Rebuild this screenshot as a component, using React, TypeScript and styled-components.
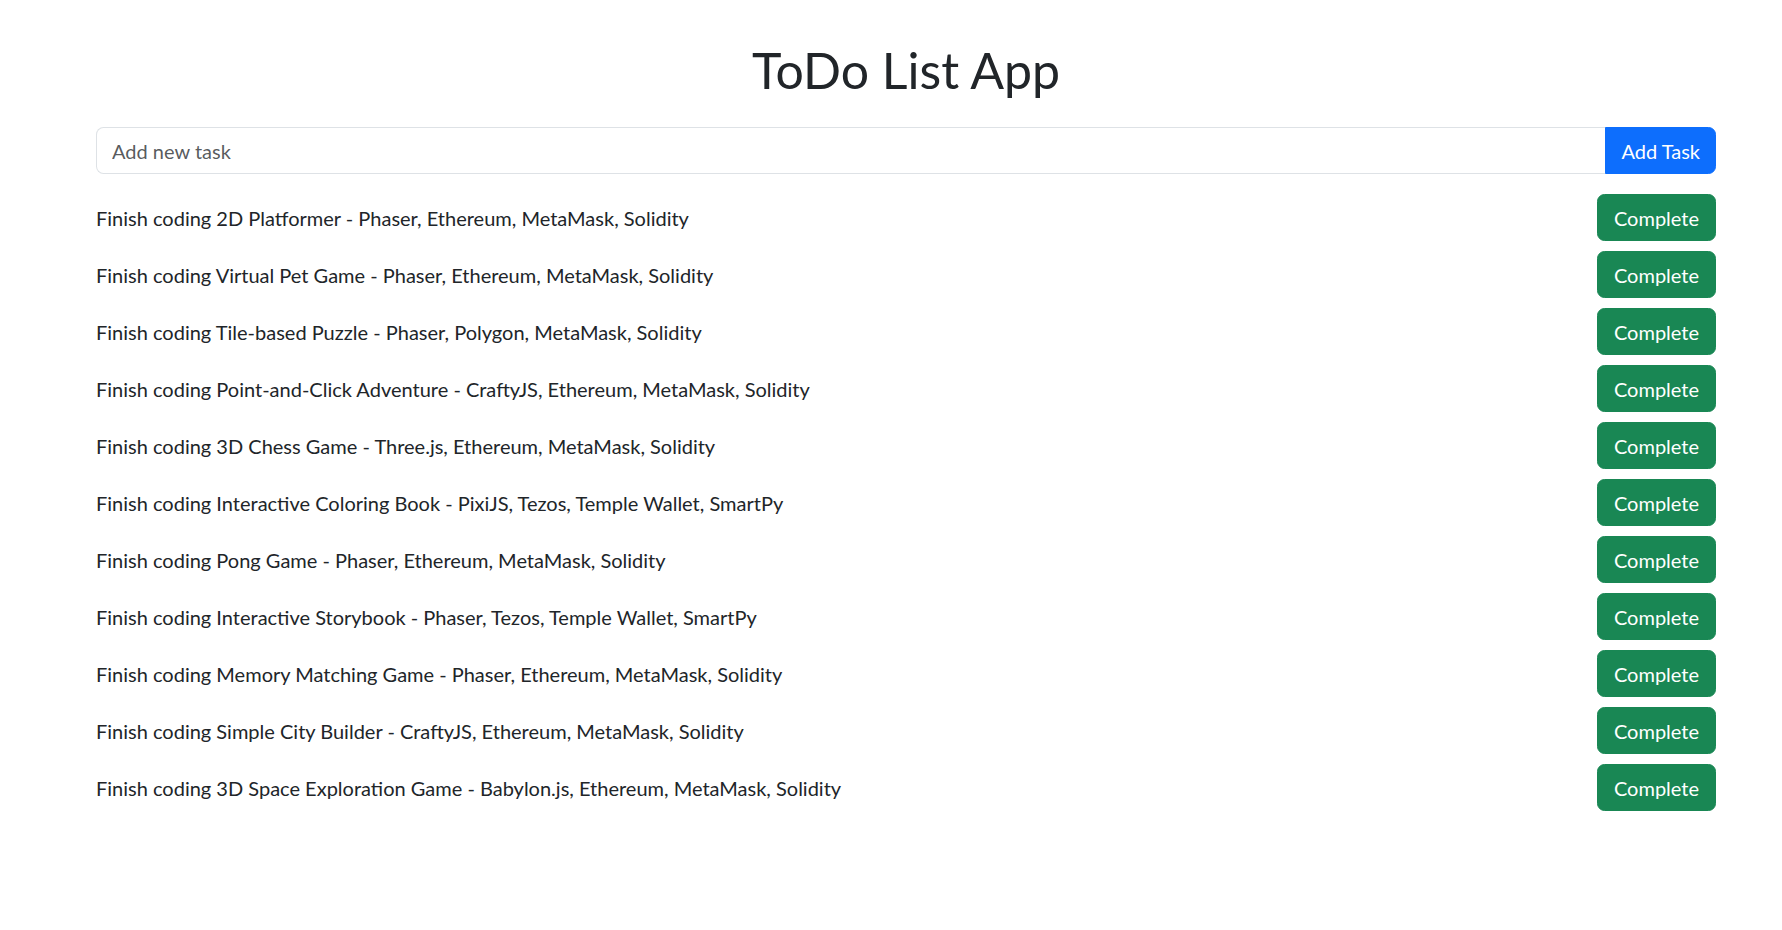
import React, { useState } from "react";
import styled, { createGlobalStyle } from "styled-components";

const GlobalStyle = createGlobalStyle`
  * { box-sizing: border-box; }
  body {
    margin: 0;
    background: #ffffff;
    color: #212529;
    font-family: Lato, "Noto Sans", Roboto, sans-serif;
    font-size: 20px;
    line-height: 1.5;
  }
`;

const Page = styled.div`
  padding: 40px 66px 40px 96px;
`;

const Title = styled.h1`
  margin: 0 0 27px;
  text-align: center;
  font-size: 50px;
  font-weight: 400;
  line-height: 60px;
  color: #212529;
`;

const InputGroup = styled.form`
  display: flex;
  align-items: stretch;
  margin-bottom: 20px;
`;

const TaskInput = styled.input`
  flex: 1;
  min-width: 0;
  height: 47px;
  padding: 7.5px 15px;
  font: inherit;
  color: #212529;
  border: 1.25px solid #dee2e6;
  border-right: none;
  border-radius: 7.5px 0 0 7.5px;
  outline: none;
  &::placeholder {
    color: rgba(33, 37, 41, 0.75);
  }
`;

const Button = styled.button<{ $variant: "primary" | "success" }>`
  height: 47px;
  padding: 0 16px;
  font: inherit;
  color: #ffffff;
  border: 1.25px solid ${(p) => (p.$variant === "primary" ? "#0d6efd" : "#198754")};
  background: ${(p) => (p.$variant === "primary" ? "#0d6efd" : "#198754")};
  border-radius: 7.5px;
  cursor: pointer;
  white-space: nowrap;
`;

const AddButton = styled(Button)`
  padding: 0 15px;
  border-radius: 0 7.5px 7.5px 0;
`;

const List = styled.ul`
  list-style: none;
  margin: 0;
  padding: 0;
`;

const Row = styled.li`
  display: flex;
  align-items: center;
  justify-content: space-between;
  margin-bottom: 10px;
`;

const TaskText = styled.span`
  line-height: 30px;
`;

const initialTasks = [
  "Finish coding 2D Platformer - Phaser, Ethereum, MetaMask, Solidity",
  "Finish coding Virtual Pet Game - Phaser, Ethereum, MetaMask, Solidity",
  "Finish coding Tile-based Puzzle - Phaser, Polygon, MetaMask, Solidity",
  "Finish coding Point-and-Click Adventure - CraftyJS, Ethereum, MetaMask, Solidity",
  "Finish coding 3D Chess Game - Three.js, Ethereum, MetaMask, Solidity",
  "Finish coding Interactive Coloring Book - PixiJS, Tezos, Temple Wallet, SmartPy",
  "Finish coding Pong Game - Phaser, Ethereum, MetaMask, Solidity",
  "Finish coding Interactive Storybook - Phaser, Tezos, Temple Wallet, SmartPy",
  "Finish coding Memory Matching Game - Phaser, Ethereum, MetaMask, Solidity",
  "Finish coding Simple City Builder - CraftyJS, Ethereum, MetaMask, Solidity",
  "Finish coding 3D Space Exploration Game - Babylon.js, Ethereum, MetaMask, Solidity",
];

export default function App() {
  const [tasks, setTasks] = useState<string[]>(initialTasks);
  const [value, setValue] = useState("");

  const add = (e: React.FormEvent) => {
    e.preventDefault();
    if (!value.trim()) return;
    setTasks([...tasks, value.trim()]);
    setValue("");
  };

  return (
    <>
      <GlobalStyle />
      <Page>
        <Title>ToDo List App</Title>
        <InputGroup onSubmit={add}>
          <TaskInput
            placeholder="Add new task"
            value={value}
            onChange={(e) => setValue(e.target.value)}
          />
          <AddButton type="submit" $variant="primary">Add Task</AddButton>
        </InputGroup>
        <List>
          {tasks.map((t, i) => (
            <Row key={i}>
              <TaskText>{t}</TaskText>
              <Button
                $variant="success"
                onClick={() => setTasks(tasks.filter((_, j) => j !== i))}
              >
                Complete
              </Button>
            </Row>
          ))}
        </List>
      </Page>
    </>
  );
}
